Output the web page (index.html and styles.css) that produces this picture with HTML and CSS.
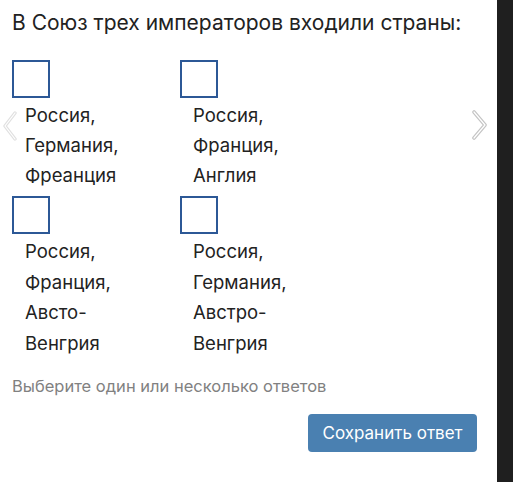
FILE: index.html
```html
<!DOCTYPE html>
<html lang="ru">
<head>
  <meta charset="UTF-8">
  <title>Вопрос</title>
  <link rel="stylesheet" href="styles.css">
</head>
<body>
  <div class="page">
    <div class="card">
      <h1 class="question">В Союз трех императоров входили страны:</h1>

      <!-- Answers -->
      <div class="answers">
        <label class="answer">
          <span class="box"></span>
          <span class="text">Россия,<br>Германия,<br>Фреанция</span>
        </label>
        <label class="answer">
          <span class="box"></span>
          <span class="text">Россия,<br>Франция,<br>Англия</span>
        </label>
        <label class="answer">
          <span class="box"></span>
          <span class="text">Россия,<br>Франция,<br>Австо-<br>Венгрия</span>
        </label>
        <label class="answer">
          <span class="box"></span>
          <span class="text">Россия,<br>Германия,<br>Австро-<br>Венгрия</span>
        </label>
      </div>

      <div class="hint">Выберите один или несколько ответов</div>
      <div class="actions">
        <button class="save">Сохранить ответ</button>
      </div>

      <!-- Carousel arrows -->
      <svg class="arrow arrow-left" width="16" height="30" viewBox="0 0 16 30">
        <path d="M13 2 L3 15 L13 28" fill="none" stroke="#e0e0e0" stroke-width="3.4" stroke-linejoin="round" stroke-linecap="round"/>
        <path d="M13 2 L3 15 L13 28" fill="none" stroke="#ffffff" stroke-width="1.2" stroke-linejoin="round" stroke-linecap="round"/>
      </svg>
      <svg class="arrow arrow-right" width="18" height="30" viewBox="0 0 18 30">
        <path d="M3 2 L14 15 L3 28" fill="none" stroke="#c4c4c4" stroke-width="3.6" stroke-linejoin="round" stroke-linecap="round"/>
        <path d="M3 2 L14 15 L3 28" fill="none" stroke="#ffffff" stroke-width="1.2" stroke-linejoin="round" stroke-linecap="round"/>
      </svg>
    </div>
    <div class="side"></div>
  </div>
</body>
</html>
```

FILE: styles.css
```css
body {
  margin: 0;
  font-family: Inter, 'Liberation Sans', sans-serif;
  color: #222;
  background: #fff;
}

.page {
  display: flex;
  height: 482px;
}

.card {
  position: relative;
  flex: 1;
  padding: 10px 0 0 12px;
}

.side {
  width: 16px;
  background: #1f1f1f;
}

.question {
  margin: 0;
  font-size: 21px;
  font-weight: normal;
  line-height: 26px;
  color: #222;
}

.answers {
  display: grid;
  grid-template-columns: 168px 168px;
  row-gap: 6px;
  margin-top: 24px;
}

.answer {
  display: flex;
  flex-direction: column;
}

.box {
  width: 34px;
  height: 34px;
  border: 2px solid #2c5896;
}

.text {
  margin-left: 13px;
  padding-top: 2px;
  font-size: 18.5px;
  line-height: 30px;
  color: #222;
}

.answer:nth-child(n+3) .text {
  line-height: 30.5px;
}

.hint {
  margin-top: 18px;
  font-size: 16.5px;
  color: #818181;
}

.actions {
  display: flex;
  justify-content: flex-end;
  padding-right: 20px;
  margin-top: 18px;
}

.save {
  width: 169px;
  height: 38px;
  border: 0;
  border-radius: 4px;
  background: #4a80b1;
  color: #fff;
  font-family: Inter, 'Liberation Sans', sans-serif;
  font-size: 17px;
}

.arrow {
  position: absolute;
}
.arrow-left {
  left: 2px;
  top: 111px;
}
.arrow-right {
  right: 8px;
  top: 110px;
}
```
